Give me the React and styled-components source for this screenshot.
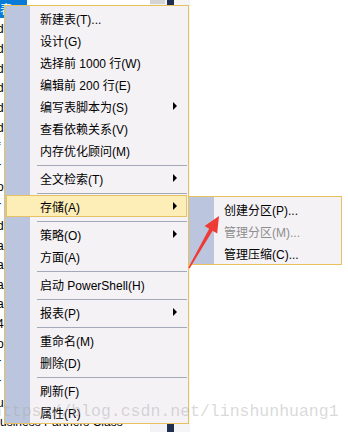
import styled, { createGlobalStyle } from 'styled-components';

const GlobalStyle = createGlobalStyle`
body{
    margin: 0;
    background: #fff;
    font-family: "Liberation Sans", "Noto Sans CJK SC", sans-serif;
}
`

const mainItems = [
    { label: '新建表(T)...' },
    { label: '设计(G)' },
    { label: '选择前 1000 行(W)' },
    { label: '编辑前 200 行(E)' },
    { label: '编写表脚本为(S)', arrow: true },
    { label: '查看依赖关系(V)' },
    { label: '内存优化顾问(M)' },
    { sep: true },
    { label: '全文检索(T)', arrow: true },
    { sep: true },
    { label: '存储(A)', arrow: true, active: true },
    { sep: true },
    { label: '策略(O)', arrow: true },
    { label: '方面(A)' },
    { sep: true },
    { label: '启动 PowerShell(H)' },
    { sep: true },
    { label: '报表(P)', arrow: true },
    { sep: true },
    { label: '重命名(M)' },
    { label: '删除(D)' },
    { sep: true },
    { label: '刷新(F)' },
    { label: '属性(R)' },
]

const subItems = [
    { label: '创建分区(P)...' },
    { label: '管理分区(M)...', disabled: true },
    { label: '管理压缩(C)...' },
]

const treeTails = ['d', 'd', 'd', 'd', 'd', 'd', 'f', 'r', 'o', 'r', 'd', 'a', 'a', 'a', 'a', '4', 'o', 'r', 'r', 'u']

const App = () => {
    return(
        <Page>
            <GlobalStyle />
            <Explorer>
                <Tree>
                    <TreeRow>
                        <Selected>表</Selected>
                    </TreeRow>
                    {treeTails.map((c, i) => (
                        <TreeRow key={i}>
                            <Tail>{c}</Tail>
                        </TreeRow>
                    ))}
                    <TreeRow>
                        <span>usiness Partners Class</span>
                    </TreeRow>
                </Tree>
                <ScrollTrack>
                    <Thumb />
                </ScrollTrack>
            </Explorer>
            <Splitter />
            <SidePanel />

            <Menu>
                {mainItems.map((it, i) => it.sep ? (
                    <Separator key={i} />
                ) : (
                    <Item key={i} $active={it.active}>
                        <span>{it.label}</span>
                        {it.arrow && <Arrow $active={it.active} />}
                    </Item>
                ))}
            </Menu>

            <SubMenu>
                {subItems.map((it, i) => (
                    <Item key={i} $disabled={it.disabled}>
                        <span>{it.label}</span>
                    </Item>
                ))}
            </SubMenu>

            <Pointer width="50" height="62" viewBox="184 212 50 62">
                <polygon
                    points="189.6,268.4 212.6,230.8 217.2,233.6 219,216 204.6,226 209.2,228.8 188.4,267.6"
                    fill="#ee3b36"
                />
            </Pointer>

            <Watermark>https://blog.csdn.net/linshunhuang1</Watermark>
        </Page>
    )
}

export default App

const Page = styled.div`
position: relative;
width: 348px;
height: 432px;
overflow: hidden;
display: flex;
background: #fff;
`
const Explorer = styled.div`
display: flex;
width: 167px;
`
const Tree = styled.div`
width: 150px;
display: flex;
flex-direction: column;
font-size: 12px;
color: #000;
`
const TreeRow = styled.div`
height: 20px;
display: flex;
align-items: center;
white-space: nowrap;
`
const Selected = styled.span`
display: block;
width: 27px;
height: 18px;
margin-top: -2px;
background: #0a7ad9;
border-top: 1px dotted #f08a1c;
color: #fff;
`
const Tail = styled.span`
margin-left: -3px;
`
const ScrollTrack = styled.div`
width: 17px;
background: #f3f2f5;
display: flex;
flex-direction: column;
`
const Thumb = styled.div`
height: 4px;
width: 15px;
background: #d4d4d4;
`
const Splitter = styled.div`
width: 7px;
background: #1f2f4f;
`
const SidePanel = styled.div`
width: 16px;
background: #f5f4f7;
`
const Menu = styled.div`
position: absolute;
left: 4px;
top: 5px;
width: 183px;
padding-top: 1px;
border: 1px solid #e9c15c;
background: linear-gradient(to right, #bbc6de 0 25px, #f5f2f6 25px);
font-size: 12px;
`
const SubMenu = styled(Menu)`
left: 188px;
top: 196px;
width: 152px;
`
const Item = styled.div`
height: ${p => p.$active ? '20px' : '22px'};
margin: ${p => p.$active ? '1px 1px' : '0'};
padding-left: ${p => p.$active ? '33px' : '35px'};
border: ${p => p.$active ? '1px solid #e5c365' : 'none'};
background: ${p => p.$active ? '#fdedb7' : 'transparent'};
display: flex;
align-items: center;
justify-content: space-between;
color: ${p => p.$disabled ? '#8d8d8d' : '#000'};
white-space: nowrap;
`
const Arrow = styled.i`
width: 0;
height: 0;
border-left: 4px solid #000;
border-top: 4px solid transparent;
border-bottom: 4px solid transparent;
margin-right: ${p => p.$active ? '9px' : '11px'};
`
const Separator = styled.div`
height: 1px;
margin: 4px 1px 1px 32px;
background: #a4a9ba;
`
const Pointer = styled.svg`
position: absolute;
left: 184px;
top: 212px;
`
const Watermark = styled.div`
position: absolute;
left: -8px;
top: 402px;
font-family: "Liberation Mono", monospace;
font-size: 16.5px;
color: rgba(170, 170, 170, 0.45);
white-space: nowrap;
pointer-events: none;
`
